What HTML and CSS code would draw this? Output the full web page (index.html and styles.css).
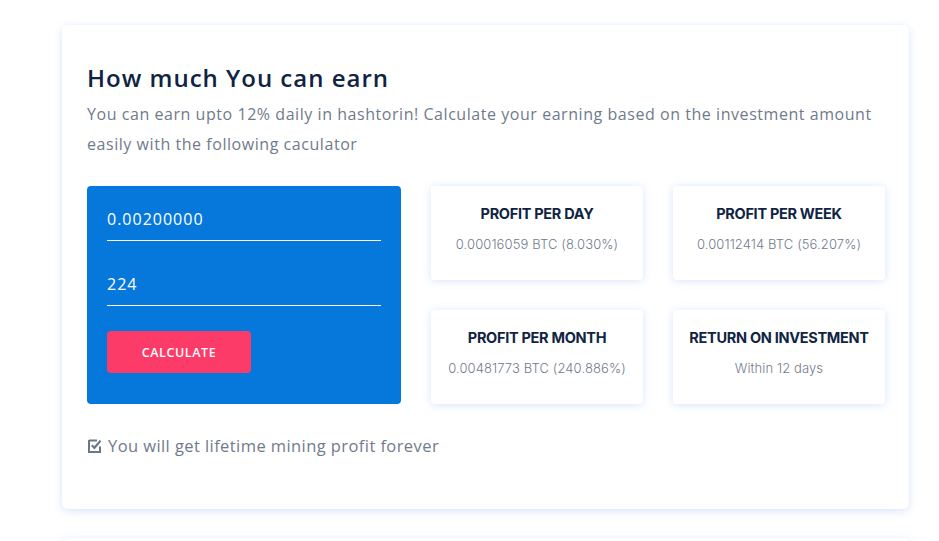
FILE: index.html
```html
<!DOCTYPE html>
<html lang="en">
<head>
<meta charset="utf-8">
<title>How much You can earn</title>
<link rel="stylesheet" href="styles.css">
</head>
<body>
<div class="page">
  <section class="panel">
    <h2 class="title">How much You can earn</h2>
    <p class="lead">You can earn upto 12% daily in hashtorin! Calculate your earning based on the investment amount easily with the following caculator</p>
    <div class="calc">
      <form class="form">
        <div class="field"><input class="input" type="text" value="0.00200000"></div>
        <div class="field"><input class="input" type="text" value="224"></div>
        <button type="button" class="btn">CALCULATE</button>
      </form>
      <div class="stat">
        <h3 class="stat-title">PROFIT PER DAY</h3>
        <p class="stat-value">0.00016059 BTC (8.030%)</p>
      </div>
      <div class="stat">
        <h3 class="stat-title">PROFIT PER WEEK</h3>
        <p class="stat-value">0.00112414 BTC (56.207%)</p>
      </div>
      <div class="stat">
        <h3 class="stat-title">PROFIT PER MONTH</h3>
        <p class="stat-value">0.00481773 BTC (240.886%)</p>
      </div>
      <div class="stat">
        <h3 class="stat-title">RETURN ON INVESTMENT</h3>
        <p class="stat-value">Within 12 days</p>
      </div>
    </div>
    <p class="note">
      <svg class="check" width="14" height="14" viewBox="0 0 14 14" aria-hidden="true">
        <path d="M1 1.5 H9 M1 1 V13 H12 V7.5" fill="none" stroke="#6b7789" stroke-width="2"/>
        <path d="M3.8 6.2 L6.4 8.8 L12.6 1.6" fill="none" stroke="#6b7789" stroke-width="2.2"/>
      </svg>
      <span>You will get lifetime mining profit forever</span>
    </p>
  </section>
  <section class="panel panel-next"></section>
</div>
</body>
</html>
```
FILE: styles.css
```css
* { box-sizing: border-box; }
html, body { margin: 0; padding: 0; background: #fff; }
body { font-family: "Open Sans", "Liberation Sans", sans-serif; }
.page {
  padding: 25px 30px 0 62px;
  display: flex;
  flex-direction: column;
  gap: 29px;
}
.panel {
  width: 847px;
  background: #fff;
  border-radius: 6px;
  box-shadow: 0 2px 9px rgba(120, 170, 240, 0.3);
  padding: 37px 25px 53px 25px;
}
.panel-next { height: 60px; padding: 0; }
.title {
  margin: 0;
  font-family: "Open Sans", sans-serif;
  font-weight: 600;
  font-size: 24px;
  line-height: 32px;
  color: #0f2442;
  letter-spacing: 1px;
}
.lead {
  margin: 5px 0 0 0;
  font-family: "Open Sans", sans-serif;
  font-weight: 400;
  font-size: 16px;
  line-height: 30px;
  color: #6f7b8c;
  letter-spacing: 0.55px;
}
.calc {
  margin-top: 27px;
  display: grid;
  grid-template-columns: 314px 212px 212px;
  grid-template-rows: 94px 94px;
  column-gap: 30px;
  row-gap: 30px;
}
.form {
  grid-row: 1 / span 2;
  background: #0678db;
  border-radius: 4px;
  padding: 12px 20px 0 20px;
  display: flex;
  flex-direction: column;
  margin: 0;
}
.field {
  border-bottom: 1px solid #fff;
  margin-bottom: 22px;
}
.input {
  display: block;
  width: 100%;
  height: 42px;
  border: 0;
  background: transparent;
  color: #ffffff;
  -webkit-text-fill-color: #ffffff;
  font-family: "Open Sans", sans-serif;
  font-weight: 400;
  font-size: 16px;
  letter-spacing: 1px;
  padding: 0;
  outline: none;
}
.field + .field { margin-bottom: 25px; }
.btn {
  width: 144px;
  height: 42px;
  border: 0;
  border-radius: 4px;
  background: #fc3b69;
  color: #fff;
  font-family: "Open Sans", sans-serif;
  font-weight: 600;
  font-size: 12.5px;
  letter-spacing: 0.6px;
  padding: 0;
}
.stat {
  background: #fff;
  border-radius: 4px;
  box-shadow: 0 1px 9px rgba(120, 170, 240, 0.3);
  text-align: center;
  padding-top: 18px;
}
.stat-title {
  margin: 0;
  font-family: "Inter", sans-serif;
  font-weight: 700;
  font-size: 14.5px;
  line-height: 20px;
  color: #0f2442;
  letter-spacing: -0.3px;
}
.stat-value {
  margin: 10px 0 0 0;
  font-family: "Inter", sans-serif;
  font-weight: 300;
  font-size: 13px;
  line-height: 20px;
  color: #6f7b8c;
  letter-spacing: 0.1px;
}
.note {
  margin: 32px 0 0 1px;
  display: flex;
  align-items: center;
  gap: 6px;
  font-family: "Open Sans", sans-serif;
  font-size: 16.5px;
  line-height: 20px;
  color: #6f7b8c;
  letter-spacing: 0.42px;
}
.check { flex: none; }
```
